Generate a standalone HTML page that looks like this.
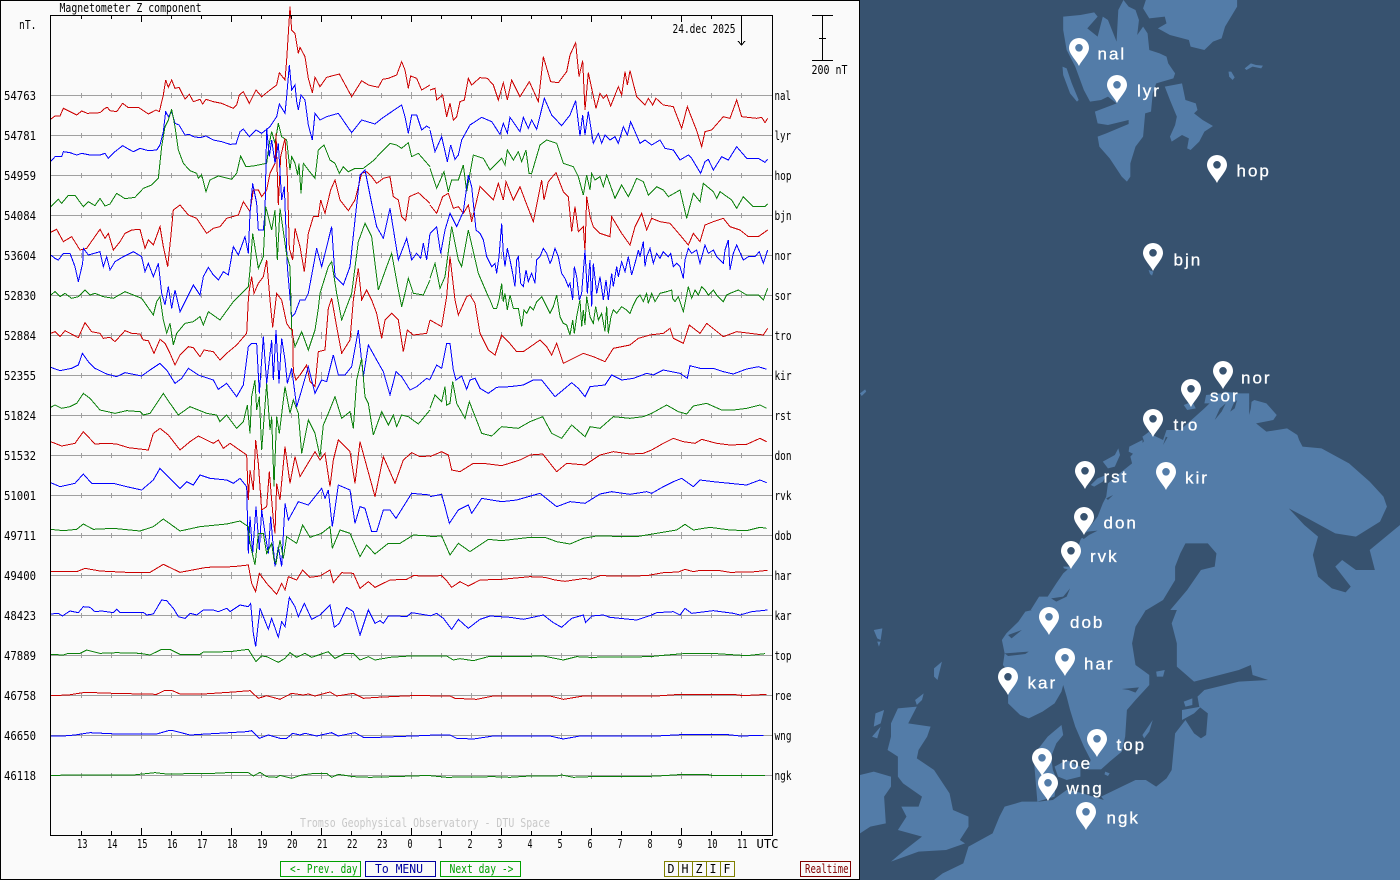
<!DOCTYPE html>
<html><head><meta charset="utf-8"><title>Magnetometer Z component</title>
<style>
html,body{margin:0;padding:0;background:#fafafa;width:1400px;height:880px;overflow:hidden}
svg{display:block}
.t text{font-family:"DejaVu Sans Mono","Liberation Mono",monospace;font-size:12px;fill:#000}
.tr polyline{fill:none;stroke-width:3;stroke-linejoin:miter}
.r{stroke:#cc0000}.b{stroke:#0000ff}.g{stroke:#0a800a}
.lb text{font-family:"Liberation Sans",sans-serif;font-size:17px;letter-spacing:2px;fill:#fff;stroke:#fff;stroke-width:.3}
</style></head><body>
<svg width="1400" height="880" viewBox="0 0 1400 880" xmlns="http://www.w3.org/2000/svg">
<defs>
<path id="tk" fill="none" stroke="#a0a0a0" d="M81.5 93v5M111.5 93v5M141.5 92v7M171.5 93v5M201.5 93v5M231.5 92v7M261.5 93v5M291.5 93v5M321.5 92v7M351.5 93v5M381.5 93v5M411.5 92v7M441.5 93v5M471.5 93v5M501.5 92v7M531.5 93v5M561.5 93v5M591.5 92v7M621.5 93v5M651.5 93v5M681.5 92v7M711.5 93v5M741.5 93v5"/>
<path id="pin" fill="#fff" fill-rule="evenodd" d="M0 0C-2.5-5.5-10-12-10-18A10 10 0 1 1 10-18C10-12 2.5-5.5 0 0ZM0-22A3.8 3.8 0 1 0 0-14.4 3.8 3.8 0 1 0 0-22Z"/>
</defs>
<rect width="860" height="880" fill="#fafafa"/>
<!-- grid -->
<path fill="none" stroke="#a0a0a0" shape-rendering="crispEdges" d="M51 95.5H772M51 135.5H772M51 175.5H772M51 215.5H772M51 255.5H772M51 295.5H772M51 335.5H772M51 375.5H772M51 415.5H772M51 455.5H772M51 495.5H772M51 535.5H772M51 575.5H772M51 615.5H772M51 655.5H772M51 695.5H772M51 735.5H772M51 775.5H772"/>
<g shape-rendering="crispEdges">
<use href="#tk"/><use href="#tk" y="40"/><use href="#tk" y="80"/><use href="#tk" y="120"/><use href="#tk" y="160"/><use href="#tk" y="200"/><use href="#tk" y="240"/><use href="#tk" y="280"/><use href="#tk" y="320"/><use href="#tk" y="360"/><use href="#tk" y="400"/><use href="#tk" y="440"/><use href="#tk" y="480"/><use href="#tk" y="520"/><use href="#tk" y="560"/><use href="#tk" y="600"/><use href="#tk" y="640"/><use href="#tk" y="680"/>
</g>
<!-- traces -->
<g class="tr" shape-rendering="crispEdges">
<g transform="scale(.33333)">
<polyline class="r" points="152,358 165,348 180,348 190,325 210,335 230,345 245,333 262,340 300,338 315,325 322,322 330,332 350,335 368,310 385,323 415,322 445,342 468,330 478,335 490,285 497,240 505,262 515,240 525,265 537,262 555,297 568,283 580,305 600,298 608,312 618,298 640,305 665,310 700,325 710,315 718,285 730,275 748,310 768,270 785,290 810,270 830,255 838,218 855,240 860,180 870,20 875,90 885,100 895,160 900,142 915,170 925,235 937,278 945,232 960,260 980,232 1018,222 1055,290 1085,242 1105,255 1135,262 1148,238 1165,235 1190,225 1205,185 1215,210 1225,265 1232,228 1250,235 1265,270 1290,255"/>
<polyline class="b" points="152,485 165,470 185,470 190,455 210,458 230,465 245,460 270,465 300,465 315,460 325,475 345,455 368,437 385,447 400,455 420,445 445,452 470,450 480,435 490,395 497,335 505,350 515,335 525,370 537,375 555,405 568,403 580,410 600,413 618,408 640,420 665,425 690,433 708,432 720,395 730,387 748,410 768,390 785,400 810,380 830,350 838,312 855,340 860,290 868,195 875,270 885,255 890,305 895,330 903,285 915,300 925,375 937,420 945,340 960,360 980,350 1015,340 1055,398 1085,360 1125,372 1150,352 1205,315 1215,350 1225,400 1235,345 1250,345 1265,390 1280,378 1290,385"/>
<polyline class="g" points="152,620 165,608 175,598 185,610 205,586 225,586 250,620 265,605 285,617 300,595 315,618 330,612 350,580 375,596 405,592 430,565 455,555 475,535 485,440 495,380 505,360 515,328 525,380 535,450 550,490 570,512 590,520 595,535 605,525 618,575 630,540 655,528 695,538 710,520 722,468 738,500 760,498 800,490 808,430 815,395 825,430 835,370 845,410 860,420 870,510 875,470 885,490 893,525 897,490 903,580 910,490 925,510 945,535 955,450 972,435 990,480 1005,490 1018,520 1030,500 1045,515 1065,505 1090,505 1120,482 1150,450 1170,430 1190,435 1205,445 1225,428 1235,470 1255,460 1290,500"/>
<polyline class="r" points="152,697 170,688 190,725 215,710 240,750 260,745 300,688 315,715 325,700 340,750 360,725 375,700 395,690 420,688 435,745 445,720 460,735 480,680 490,740 503,800 512,715 520,630 540,615 565,645 590,655 620,700 640,685 660,680 680,655 715,645 730,605 750,635 760,570 775,570 785,590 800,570 810,520 825,490 828,400 835,615 842,470 855,415 862,530 868,745 878,780 885,685 900,740 913,815 925,700 940,650 955,650 962,600 975,640 992,570 1005,540 1020,600 1045,632 1065,600 1085,520 1100,515 1115,530 1130,550 1150,535 1170,530 1180,590 1195,600 1205,650 1217,662 1228,590 1255,578 1290,610"/>
<polyline class="b" points="152,765 165,775 175,780 190,760 210,760 225,800 235,845 248,790 250,745 265,765 300,755 310,800 320,770 330,810 345,785 370,770 400,755 425,770 435,815 445,790 460,830 475,790 485,880 495,915 505,860 515,925 525,870 540,935 555,905 580,855 600,885 610,830 625,802 640,825 655,840 670,815 685,825 700,740 715,765 735,710 745,760 750,640 758,550 770,610 775,690 790,690 795,640 800,385 808,470 815,420 825,490 835,430 845,600 853,560 862,800 875,950 885,940 900,900 915,900 925,880 950,745 965,800 985,720 995,680 1005,830 1030,855 1050,800 1065,660 1080,525 1095,510 1115,610 1130,680 1150,715 1170,625 1195,780 1220,715 1235,780 1250,760 1262,775 1270,730 1280,780 1290,700"/>
<polyline class="g" points="152,885 165,875 180,890 195,880 215,895 235,890 255,870 270,885 285,880 310,890 340,895 375,875 400,885 425,895 460,945 470,905 480,890 490,960 500,1000 510,970 520,1035 530,1000 555,970 580,965 600,950 610,975 625,935 660,960 700,905 720,885 745,860 750,810 758,700 775,805 790,770 797,620 805,650 815,690 825,630 832,780 840,625 860,765 870,800 875,990 885,1040 905,995 925,1050 945,990 955,925 960,880 985,800 995,785 1010,880 1025,960 1055,880 1075,725 1095,670 1115,710 1135,870 1160,800 1175,760 1195,870 1205,920 1215,880 1225,835 1240,880 1270,885 1290,840"/>
</g>
<g transform="translate(430,0) scale(.33333)">
<polyline class="r" points="0,270 15,265 20,300 38,285 50,350 60,310 70,360 80,350 90,305 103,300 115,235 125,255 150,233 172,235 190,255 205,300 220,248 232,300 245,240 270,290 298,245 325,305 340,170 362,245 385,248 410,215 420,165 437,128 447,230 458,182 465,330 475,218 485,265 498,325 510,280 520,295 530,285 542,318 565,260 575,285 585,215 592,255 600,212 620,290 645,315 655,295 668,315 678,295 700,315 730,320 755,385 772,320 800,392 815,440 825,395 845,390 880,350 900,355 920,300 935,350 980,355 995,352 1005,368 1013,355"/>
<polyline class="b" points="0,390 15,455 35,410 52,485 62,435 75,478 85,465 95,420 120,375 155,352 185,365 210,403 220,370 232,400 240,352 270,395 280,352 295,385 305,360 320,388 343,295 365,345 395,377 420,345 437,302 450,408 458,345 465,405 475,335 490,430 505,400 515,430 525,405 540,420 555,410 565,430 580,380 592,405 602,365 615,395 630,430 645,420 665,435 690,420 705,445 730,450 750,480 775,465 785,475 812,520 825,485 835,478 850,510 875,470 895,480 920,440 950,475 985,475 1005,487 1013,478"/>
<polyline class="g" points="0,505 20,565 42,515 55,575 65,540 85,540 100,495 110,575 130,465 160,475 180,510 215,475 225,495 232,450 250,480 265,455 275,485 288,450 297,520 305,520 330,435 350,420 380,430 400,490 430,500 445,530 460,585 470,525 480,570 485,520 495,540 510,530 520,560 530,525 555,595 575,555 595,590 605,570 620,535 640,545 655,585 680,560 700,570 715,590 750,570 770,655 790,580 810,605 820,550 850,575 860,595 870,575 905,600 920,625 940,590 970,620 1005,620 1013,612"/>
<polyline class="r" points="0,615 20,640 38,590 55,580 70,625 85,620 100,640 115,615 125,665 150,560 190,600 205,550 220,600 228,545 250,600 270,560 285,600 310,665 335,540 342,600 355,545 378,518 400,575 415,590 425,695 435,620 445,695 460,680 465,755 470,590 480,650 490,680 510,700 540,710 545,650 575,700 600,735 615,680 635,640 650,690 665,655 690,665 720,670 750,705 775,735 790,700 810,725 825,675 850,665 880,655 900,680 930,690 955,710 985,710 1013,690"/>
<polyline class="b" points="0,700 20,680 32,760 45,690 60,640 80,680 100,635 115,525 125,560 138,690 150,700 160,720 170,770 175,780 185,800 195,790 200,820 207,770 215,670 220,760 225,800 232,745 240,780 248,820 255,860 260,780 265,770 272,850 280,860 288,810 295,845 305,820 315,850 320,780 330,770 340,745 350,760 360,790 365,780 375,745 385,770 395,820 405,835 415,860 420,850 428,900 433,800 440,830 448,900 455,880 465,750 472,880 480,780 485,920 490,790 500,880 510,830 520,900 528,840 535,900 545,820 550,860 560,800 565,830 575,785 585,815 595,770 605,825 615,790 625,750 630,770 640,725 645,800 650,770 660,745 670,790 680,760 690,775 700,755 715,770 722,760 730,800 740,790 750,800 760,835 765,780 775,745 785,760 800,750 810,790 825,735 835,760 850,750 860,770 880,790 885,750 895,720 900,810 910,760 920,735 940,780 955,770 975,770 988,755 1000,790 1013,750"/>
<polyline class="g" points="0,835 15,790 30,865 45,830 65,680 85,780 95,800 115,690 145,820 175,890 180,900 190,925 200,925 208,895 215,850 220,905 225,880 232,930 240,885 250,925 265,925 275,980 282,930 290,940 300,920 310,930 320,905 335,890 345,910 360,940 370,920 380,885 390,950 400,970 410,975 420,1005 428,960 433,1000 440,950 450,900 455,980 460,930 465,975 470,890 480,950 490,970 497,920 505,960 515,940 525,995 530,920 535,1000 543,950 550,930 560,940 575,920 590,930 600,940 610,915 620,895 630,885 640,905 650,880 655,910 665,880 675,905 690,880 710,875 725,870 728,895 735,905 745,890 760,935 768,895 775,860 785,895 795,870 805,885 815,860 825,870 835,885 850,870 860,885 880,905 890,885 900,880 925,870 950,885 985,885 1000,900 1013,865"/>
</g>
<g transform="translate(0,300) scale(.33333)">
<polyline class="r" points="152,100 165,95 180,110 195,92 235,113 255,68 275,95 300,100 310,115 330,112 345,125 375,92 395,100 420,102 430,120 445,122 462,160 480,118 495,130 510,160 525,195 540,165 565,140 580,143 600,170 612,150 640,155 660,180 680,160 710,135 740,100 745,0 748,-30 755,-70 762,-20 775,-50 790,-70 800,-120 810,0 818,82 830,-20 845,0 860,70 870,85 878,90 880,215 888,240 900,225 920,195 930,245 945,260 955,155 975,150 985,25 995,-5 1010,80 1025,160 1050,120 1060,0 1075,-95 1085,0 1100,-30 1115,0 1130,40 1145,115 1155,60 1175,40 1195,60 1210,155 1222,90 1240,105 1280,100 1290,60"/>
<polyline class="b" points="152,202 180,212 215,205 235,195 247,160 265,185 285,205 320,222 350,230 375,218 425,228 450,210 480,190 500,210 525,250 545,235 565,205 595,225 640,240 655,268 680,250 710,290 730,255 745,140 755,130 770,130 778,280 790,110 800,250 815,120 820,240 828,90 837,250 845,115 855,180 862,250 875,205 890,320 905,270 925,200 945,280 965,240 980,245 1000,165 1015,225 1035,225 1055,200 1075,90 1090,230 1105,135 1130,180 1150,215 1170,285 1188,215 1205,230 1230,270 1250,260 1280,235 1290,240"/>
<polyline class="g" points="152,322 165,315 185,325 210,320 230,310 250,280 270,295 300,330 345,340 380,332 420,335 430,345 450,340 490,280 510,310 535,345 570,320 620,340 650,345 660,365 680,345 710,385 730,365 742,315 750,400 755,290 765,240 770,330 778,290 785,450 800,250 810,390 815,350 822,560 830,350 838,400 855,260 870,340 880,300 895,340 905,460 925,360 945,400 960,470 970,375 985,340 1005,290 1025,355 1050,335 1060,385 1070,240 1085,175 1095,290 1105,310 1120,405 1145,335 1165,375 1180,345 1190,380 1205,345 1225,350 1255,372 1290,330"/>
<polyline class="r" points="152,425 185,438 225,430 250,395 285,432 320,430 350,432 385,443 445,450 460,400 480,385 505,405 540,450 570,425 595,408 640,430 655,420 670,445 690,430 740,465 745,600 750,510 760,570 767,420 775,490 785,630 800,620 808,515 820,660 825,700 830,550 840,600 855,440 870,550 885,470 900,530 930,480 945,455 960,480 975,460 990,560 1000,480 1015,420 1050,455 1065,550 1080,425 1095,480 1125,590 1150,470 1185,550 1210,480 1235,458 1260,470 1290,468"/>
<polyline class="b" points="152,548 180,560 225,550 250,522 275,550 340,550 380,560 425,570 460,540 480,505 510,535 540,565 560,545 580,555 600,525 630,535 680,540 700,550 720,535 740,560 745,760 750,650 758,760 768,620 778,750 785,630 795,700 805,760 812,650 825,800 835,740 845,800 855,610 865,660 895,605 925,615 945,590 965,565 975,595 985,570 997,680 1015,555 1050,570 1065,670 1080,620 1095,625 1115,695 1130,695 1150,630 1170,630 1188,655 1235,580 1290,585"/>
<polyline class="g" points="152,688 190,692 230,688 250,672 280,688 340,685 420,693 460,680 490,657 540,693 600,680 680,672 720,663 745,680 750,730 765,795 775,700 790,700 800,760 815,730 822,780 828,790 840,720 850,775 860,710 890,730 908,675 930,712 965,700 990,680 997,745 1020,690 1050,700 1080,770 1100,735 1125,762 1165,730 1200,730 1240,705 1290,708"/>
</g>
<g transform="translate(430,300) scale(.33333)">
<polyline class="r" points="0,60 35,80 50,-10 60,-130 75,0 85,45 110,-10 120,-15 135,10 150,100 175,150 195,165 215,105 235,125 260,155 280,155 330,120 350,140 365,165 380,130 400,190 420,180 460,160 490,170 525,185 550,145 600,135 625,115 660,105 700,100 720,85 730,115 760,130 778,75 810,100 830,70 880,110 920,95 1000,105 1013,85"/>
<polyline class="b" points="0,238 20,195 35,205 50,130 60,130 70,210 78,240 95,228 110,268 120,240 135,235 150,265 175,280 200,262 240,260 280,255 310,240 335,240 375,290 405,265 425,248 445,265 465,290 480,260 525,255 545,225 575,240 610,235 650,220 670,225 700,210 750,220 772,235 780,197 810,205 850,205 880,215 910,222 950,207 985,200 1010,208"/>
<polyline class="g" points="0,325 15,285 35,305 45,260 50,315 60,310 68,245 80,310 105,355 118,305 155,400 185,408 215,380 265,385 300,365 338,350 365,400 395,415 425,375 465,410 480,380 510,385 550,350 600,355 640,350 665,340 710,315 745,335 770,342 790,318 830,310 875,330 910,330 950,325 990,315 1010,325"/>
<polyline class="r" points="0,470 35,455 55,465 65,510 90,515 130,490 160,490 215,497 270,480 300,465 338,462 380,515 410,490 465,495 510,465 550,455 600,462 640,460 665,450 700,430 730,415 760,425 795,430 815,418 860,430 900,435 950,433 990,415 1010,425"/>
<polyline class="b" points="0,590 35,583 45,620 58,670 85,630 115,615 125,640 155,595 215,605 260,600 330,580 380,620 420,605 465,610 510,582 545,575 600,583 650,575 665,580 700,560 730,545 755,535 790,560 810,540 850,545 900,550 950,555 990,540 1010,548"/>
<polyline class="g" points="0,710 35,708 60,765 85,730 120,755 175,718 215,722 300,712 345,712 380,725 420,732 460,715 500,708 620,710 680,700 740,690 765,673 790,690 840,682 900,690 950,692 990,682 1010,685"/>
</g>
<g transform="translate(0,560) scale(.33333)">
<polyline class="r" points="152,35 230,35 255,25 300,33 380,37 450,37 490,13 540,37 620,22 700,20 745,15 755,70 767,95 778,40 800,70 830,103 845,70 855,90 865,50 890,60 908,30 930,52 960,48 990,30 1000,68 1025,38 1060,40 1080,85 1105,65 1125,82 1170,60 1220,58 1240,47 1290,48"/>
<polyline class="b" points="152,162 175,160 187,168 210,153 235,158 250,140 270,142 285,155 305,153 340,158 350,148 360,158 430,157 440,165 460,162 485,120 500,122 520,145 535,170 555,175 570,160 590,165 610,150 640,150 655,155 680,145 690,155 720,135 745,140 752,130 760,220 767,260 780,145 805,208 815,175 835,232 845,185 855,200 868,112 885,140 895,170 913,130 935,178 960,165 990,135 1003,202 1018,190 1040,142 1060,155 1080,225 1105,150 1125,190 1140,182 1150,190 1165,168 1190,168 1220,170 1235,158 1260,162 1290,167"/>
<polyline class="g" points="152,283 190,285 205,280 240,280 260,270 300,280 350,278 420,280 450,285 485,268 510,268 540,283 600,283 610,276 690,275 745,268 768,305 785,288 800,290 835,307 855,295 870,278 890,292 915,280 935,292 985,275 1005,295 1035,280 1060,280 1080,300 1105,290 1125,300 1170,292 1230,288 1290,288"/>
<polyline class="r" points="152,407 205,405 255,397 340,400 470,403 495,391 515,391 540,402 610,402 700,396 750,392 775,415 800,407 840,418 875,400 910,405 925,402 945,408 990,396 1010,408 1060,400 1090,415 1130,412 1235,407 1290,407"/>
<polyline class="b" points="152,528 190,528 225,525 270,518 350,522 470,522 505,512 520,512 570,525 620,522 740,515 755,512 778,535 805,525 840,535 860,535 878,520 900,525 915,520 950,528 995,518 1015,528 1065,518 1090,532 1135,532 1290,526"/>
<polyline class="g" points="152,647 200,645 400,645 465,638 500,642 640,640 700,637 745,638 760,648 780,637 800,650 830,652 840,646 875,655 905,645 945,640 980,640 995,652 1015,643 1060,650 1110,652 1240,648 1290,646"/>
</g>
<g transform="translate(430,560) scale(.33333)">
<polyline class="r" points="0,48 35,47 50,62 65,82 90,65 115,78 150,60 215,58 300,50 345,52 375,60 405,64 465,55 480,58 510,47 580,48 650,47 700,38 745,36 765,28 790,35 810,31 870,32 900,37 965,36 1013,31"/>
<polyline class="b" points="0,168 20,160 40,175 65,208 85,178 115,205 150,178 180,168 240,172 280,178 340,165 370,188 395,202 425,175 460,165 467,188 485,168 520,165 540,172 620,180 665,165 680,158 730,155 750,165 765,145 785,160 850,152 910,160 930,165 965,155 1013,150"/>
<polyline class="g" points="0,288 50,288 70,300 90,296 130,302 175,290 250,290 340,288 400,300 440,290 480,292 660,290 700,286 760,281 860,281 950,287 1005,281"/>
<polyline class="r" points="0,408 60,408 75,415 140,418 190,408 360,408 400,418 460,408 680,408 750,403 910,403 940,407 1010,403"/>
<polyline class="b" points="0,525 60,525 80,535 130,537 190,528 360,528 400,537 450,528 680,528 770,523 885,523 930,528 1000,526"/>
<polyline class="g" points="0,647 50,652 190,650 240,652 300,648 380,648 395,645 430,652 480,650 640,650 700,647 760,643 830,643 850,647 1005,647"/>
</g>
</g>
<!-- axes -->
<g fill="none" stroke="#000" shape-rendering="crispEdges">
<rect x="50.5" y="15.5" width="722" height="820"/>
<path d="M81.5 15v4M111.5 15v4M141.5 15v7M171.5 15v4M201.5 15v4M231.5 15v7M261.5 15v4M291.5 15v4M321.5 15v7M351.5 15v4M381.5 15v4M411.5 15v7M441.5 15v4M471.5 15v4M501.5 15v7M531.5 15v4M561.5 15v4M591.5 15v7M621.5 15v4M651.5 15v4M681.5 15v7M711.5 15v4"/>
<path d="M81.5 835v-4M111.5 835v-4M141.5 835v-7M171.5 835v-4M201.5 835v-4M231.5 835v-7M261.5 835v-4M291.5 835v-4M321.5 835v-7M351.5 835v-4M381.5 835v-4M411.5 835v-7M441.5 835v-4M471.5 835v-4M501.5 835v-7M531.5 835v-4M561.5 835v-4M591.5 835v-7M621.5 835v-4M651.5 835v-4M681.5 835v-7M711.5 835v-4M741.5 835v-4"/>
<path d="M741.5 15v30M738 41l3.5 4 3.5-4"/>
<path d="M822.5 15v45M812 15.5h21M812 60.5h21M819 38.5h7"/>
<rect x=".5" y=".5" width="859" height="879"/>
</g>
<!-- text -->
<g class="t">
<text x="59.5" y="12" textLength="142" lengthAdjust="spacingAndGlyphs">Magnetometer Z component</text>
<text x="19" y="29" textLength="17.5" lengthAdjust="spacingAndGlyphs">nT.</text>
<text x="672.5" y="33" textLength="63" lengthAdjust="spacingAndGlyphs">24.dec 2025</text>
<text x="811.5" y="74" textLength="36" lengthAdjust="spacingAndGlyphs">200 nT</text>
<g>
<text x="4" y="100" textLength="32" lengthAdjust="spacingAndGlyphs">54763</text>
<text x="4" y="140" textLength="32" lengthAdjust="spacingAndGlyphs">54781</text>
<text x="4" y="180" textLength="32" lengthAdjust="spacingAndGlyphs">54959</text>
<text x="4" y="220" textLength="32" lengthAdjust="spacingAndGlyphs">54084</text>
<text x="4" y="260" textLength="32" lengthAdjust="spacingAndGlyphs">53604</text>
<text x="4" y="300" textLength="32" lengthAdjust="spacingAndGlyphs">52830</text>
<text x="4" y="340" textLength="32" lengthAdjust="spacingAndGlyphs">52884</text>
<text x="4" y="380" textLength="32" lengthAdjust="spacingAndGlyphs">52355</text>
<text x="4" y="420" textLength="32" lengthAdjust="spacingAndGlyphs">51824</text>
<text x="4" y="460" textLength="32" lengthAdjust="spacingAndGlyphs">51532</text>
<text x="4" y="500" textLength="32" lengthAdjust="spacingAndGlyphs">51001</text>
<text x="4" y="540" textLength="32" lengthAdjust="spacingAndGlyphs">49711</text>
<text x="4" y="580" textLength="32" lengthAdjust="spacingAndGlyphs">49400</text>
<text x="4" y="620" textLength="32" lengthAdjust="spacingAndGlyphs">48423</text>
<text x="4" y="660" textLength="32" lengthAdjust="spacingAndGlyphs">47889</text>
<text x="4" y="700" textLength="32" lengthAdjust="spacingAndGlyphs">46758</text>
<text x="4" y="740" textLength="32" lengthAdjust="spacingAndGlyphs">46650</text>
<text x="4" y="780" textLength="32" lengthAdjust="spacingAndGlyphs">46118</text>
</g>
<g>
<text x="774.5" y="100" textLength="16.5" lengthAdjust="spacingAndGlyphs">nal</text>
<text x="774.5" y="140" textLength="16.5" lengthAdjust="spacingAndGlyphs">lyr</text>
<text x="774.5" y="180" textLength="17" lengthAdjust="spacingAndGlyphs">hop</text>
<text x="774.5" y="220" textLength="17" lengthAdjust="spacingAndGlyphs">bjn</text>
<text x="774.5" y="260" textLength="17" lengthAdjust="spacingAndGlyphs">nor</text>
<text x="774.5" y="300" textLength="17" lengthAdjust="spacingAndGlyphs">sor</text>
<text x="774.5" y="340" textLength="17" lengthAdjust="spacingAndGlyphs">tro</text>
<text x="774.5" y="380" textLength="17" lengthAdjust="spacingAndGlyphs">kir</text>
<text x="774.5" y="420" textLength="17" lengthAdjust="spacingAndGlyphs">rst</text>
<text x="774.5" y="460" textLength="17" lengthAdjust="spacingAndGlyphs">don</text>
<text x="774.5" y="500" textLength="17" lengthAdjust="spacingAndGlyphs">rvk</text>
<text x="774.5" y="540" textLength="17" lengthAdjust="spacingAndGlyphs">dob</text>
<text x="774.5" y="580" textLength="17" lengthAdjust="spacingAndGlyphs">har</text>
<text x="774.5" y="620" textLength="17" lengthAdjust="spacingAndGlyphs">kar</text>
<text x="774.5" y="660" textLength="17" lengthAdjust="spacingAndGlyphs">top</text>
<text x="774.5" y="700" textLength="17" lengthAdjust="spacingAndGlyphs">roe</text>
<text x="774.5" y="740" textLength="17" lengthAdjust="spacingAndGlyphs">wng</text>
<text x="774.5" y="780" textLength="17" lengthAdjust="spacingAndGlyphs">ngk</text>
</g>
<g>
<text x="77" y="848" textLength="10.5" lengthAdjust="spacingAndGlyphs">13</text>
<text x="107" y="848" textLength="10.5" lengthAdjust="spacingAndGlyphs">14</text>
<text x="137" y="848" textLength="10.5" lengthAdjust="spacingAndGlyphs">15</text>
<text x="167" y="848" textLength="10.5" lengthAdjust="spacingAndGlyphs">16</text>
<text x="197" y="848" textLength="10.5" lengthAdjust="spacingAndGlyphs">17</text>
<text x="227" y="848" textLength="10.5" lengthAdjust="spacingAndGlyphs">18</text>
<text x="257" y="848" textLength="10.5" lengthAdjust="spacingAndGlyphs">19</text>
<text x="287" y="848" textLength="10.5" lengthAdjust="spacingAndGlyphs">20</text>
<text x="317" y="848" textLength="10.5" lengthAdjust="spacingAndGlyphs">21</text>
<text x="347" y="848" textLength="10.5" lengthAdjust="spacingAndGlyphs">22</text>
<text x="377" y="848" textLength="10.5" lengthAdjust="spacingAndGlyphs">23</text>
<text x="407.5" y="848" textLength="5" lengthAdjust="spacingAndGlyphs">0</text>
<text x="437.5" y="848" textLength="5" lengthAdjust="spacingAndGlyphs">1</text>
<text x="467.5" y="848" textLength="5" lengthAdjust="spacingAndGlyphs">2</text>
<text x="497.5" y="848" textLength="5" lengthAdjust="spacingAndGlyphs">3</text>
<text x="527.5" y="848" textLength="5" lengthAdjust="spacingAndGlyphs">4</text>
<text x="557.5" y="848" textLength="5" lengthAdjust="spacingAndGlyphs">5</text>
<text x="587.5" y="848" textLength="5" lengthAdjust="spacingAndGlyphs">6</text>
<text x="617.5" y="848" textLength="5" lengthAdjust="spacingAndGlyphs">7</text>
<text x="647.5" y="848" textLength="5" lengthAdjust="spacingAndGlyphs">8</text>
<text x="677.5" y="848" textLength="5" lengthAdjust="spacingAndGlyphs">9</text>
<text x="707" y="848" textLength="10.5" lengthAdjust="spacingAndGlyphs">10</text>
<text x="737" y="848" textLength="10.5" lengthAdjust="spacingAndGlyphs">11</text>
<text x="756.5" y="848" textLength="22" lengthAdjust="spacingAndGlyphs">UTC</text>
</g>
<text x="300" y="827" textLength="250" lengthAdjust="spacingAndGlyphs" style="fill:#c8c8c8">Tromso Geophysical Observatory - DTU Space</text>
<!-- buttons -->
<g fill="none" shape-rendering="crispEdges">
<rect x="280.5" y="861.5" width="80" height="15" stroke="#00a000"/>
<rect x="365.5" y="861.5" width="70" height="15" stroke="#0000a0"/>
<rect x="440.5" y="861.5" width="80" height="15" stroke="#00a000"/>
<rect x="664.5" y="861.5" width="70" height="15" stroke="#808000"/>
<path d="M678.5 861v16M692.5 861v16M706.5 861v16M720.5 861v16" stroke="#808000"/>
<rect x="800.5" y="861.5" width="50" height="15" stroke="#800000"/>
</g>
<text x="290" y="873" textLength="67.5" lengthAdjust="spacingAndGlyphs" style="fill:#00a000">&lt;- Prev. day</text>
<text x="375" y="873" textLength="48" lengthAdjust="spacingAndGlyphs" style="fill:#0000a0">To MENU</text>
<text x="449.5" y="873" textLength="64" lengthAdjust="spacingAndGlyphs" style="fill:#00a000">Next day -&gt;</text>
<text x="667.5" y="873" textLength="7" lengthAdjust="spacingAndGlyphs">D</text>
<text x="681.5" y="873" textLength="7" lengthAdjust="spacingAndGlyphs">H</text>
<text x="695.5" y="873" textLength="7" lengthAdjust="spacingAndGlyphs">Z</text>
<text x="709.5" y="873" textLength="7" lengthAdjust="spacingAndGlyphs">I</text>
<text x="723.5" y="873" textLength="7" lengthAdjust="spacingAndGlyphs">F</text>
<text x="805" y="873" textLength="43.5" lengthAdjust="spacingAndGlyphs" style="fill:#800000">Realtime</text>
</g>
<!-- map -->
<rect x="860" y="0" width="540" height="880" fill="#37526f"/>
<g fill="#537ca8">
<g transform="translate(860,0) scale(.34439,.33333)">
<polygon points="590,50 640,45 680,37 690,50 660,85 690,110 705,50 720,60 745,125 750,30 765,0 780,20 800,30 810,60 805,105 822,80 835,100 840,150 870,160 890,170 895,190 915,220 910,235 860,250 850,280 845,335 828,340 822,410 800,440 785,490 785,530 775,545 760,530 725,475 695,440 690,410 715,400 780,372 780,360 720,375 690,370 682,335 745,310 720,290 700,300 668,305 650,270 625,200 600,150 590,90"/>
<polygon points="588,200 600,205 615,250 635,300 630,305 610,280 590,225"/>
<polygon points="830,0 1095,0 1095,20 1060,80 1050,115 1025,125 1000,150 960,140 955,120 900,105 865,85 890,70 885,50 840,55 822,25"/>
<polygon points="885,260 935,250 945,300 975,310 980,330 970,340 995,360 1025,378 1000,395 985,425 960,450 950,445 955,415 935,405 905,425 900,410 915,375 920,350 900,300"/>
<polygon points="1070,215 1078,215 1088,232 1082,240 1072,230"/>
<polygon points="1117,205 1135,190 1150,195 1170,197 1165,205 1140,200 1122,210"/>
<polygon points="838,810 852,815 848,827 842,822"/>
</g>
<g transform="translate(860,340) scale(.34439,.33333)">
<polygon points="495,811 520,770 545,770 570,730 590,700 612,680 640,600 660,570 690,530 705,490 715,470 720,430 760,395 790,370 785,350 820,310 840,280 880,300 890,270 930,270 1000,205 1030,175 1060,155 1100,160 1130,160 1130,190 1145,180 1180,190 1210,225 1200,240 1150,250 1180,275 1240,265 1270,285 1275,300 1285,320 1340,325 1420,370 1480,425 1520,470 1530,500 1510,545 1440,590 1380,580 1300,535 1245,505 1290,555 1330,590 1315,645 1330,710 1370,745 1410,757 1425,740 1380,680 1400,660 1440,690 1495,690 1480,630 1568,555 1568,811"/>
<polygon points="705,365 740,345 750,325 755,345 740,380 720,385"/>
<polygon points="670,435 690,415 715,405 705,425 680,440"/>
<polygon points="782,320 820,300 822,320 800,345 780,335"/>
<polygon points="820,290 840,275 850,300 825,305"/>
<polygon points="940,195 965,185 975,205 950,210"/>
<polygon points="1005,165 1050,160 1030,190 1000,190"/>
<polygon points="0,160 15,148 18,155 5,168"/>
<polygon points="590,680 615,680 610,690 592,685"/>
</g>
<rect x="860" y="610" width="540" height="270"/>
</g>
<g fill="#37526f">
<g transform="translate(860,340) scale(.34439,.33333)">
<polygon points="945,610 1010,610 1035,640 1030,680 990,690 950,750 900,811 830,811 880,780 915,720 915,680 930,640"/>
<polygon points="1030,240 1045,205 1062,190 1050,215"/>
<polygon points="1075,215 1085,190 1095,180 1088,205"/>
<polygon points="1130,225 1130,190 1137,185 1135,205"/>
<polygon points="880,315 888,290 893,292"/>
<polygon points="640,590 660,575 690,572 665,585 650,597"/>
<polygon points="715,475 735,465 720,480"/>
<polygon points="555,775 590,770 610,745 600,770 570,785"/>
</g>
<g transform="translate(860,610) scale(.34439,.33333)">
<polygon points="0,0 500,0 480,5 460,35 425,70 412,90 420,130 415,165 440,195 430,230 430,280 465,315 490,325 530,305 565,280 585,245 590,225 600,260 610,300 625,350 650,410 670,450 660,478 700,478 725,455 760,425 770,380 775,300 800,270 840,225 840,195 800,165 790,100 800,50 830,0 920,0 905,40 920,100 920,170 970,215 1100,180 1135,165 1140,195 1185,210 1100,215 1000,240 980,260 985,290 1010,310 1005,375 990,385 970,370 945,330 915,370 905,480 890,505 860,530 830,510 800,510 760,530 700,560 708,570 640,548 600,540 560,570 520,575 470,575 420,590 405,620 385,670 315,710 300,760 240,790 215,810 0,810"/>
<polygon points="420,130 490,125 480,132 430,138"/>
<polygon points="430,75 470,60 440,85"/>
<polygon points="760,237 810,232 800,248 780,240"/>
</g>
</g>
<g fill="#537ca8" transform="translate(860,610) scale(.34439,.33333)">
<polygon points="90,340 110,295 165,290 140,340 205,350 195,380 170,420 165,445 215,480 260,550 270,600 315,620 315,650 290,690 305,700 250,720 170,725 90,755 130,720 180,680 110,660 135,620 120,590 170,590 180,560 125,520 110,500 110,440 80,420 90,380"/>
<polygon points="0,495 40,485 90,500 90,530 70,560 75,640 30,650 0,670"/>
<polygon points="45,310 70,300 60,340 40,350"/>
<polygon points="35,380 60,350 50,385"/>
<polygon points="160,270 185,250 180,270 165,285"/>
<polygon points="215,175 238,155 225,210 215,200"/>
<polygon points="40,60 65,55 60,90 50,85"/>
<polygon points="50,95 60,95 55,110"/>
<polygon points="515,420 545,380 585,345 590,375 570,400 555,440 560,480 570,505 565,560 515,575 505,450"/>
<polygon points="565,470 600,450 640,470 640,500 600,510 575,500"/>
<polygon points="712,485 725,490 720,498 710,493"/>
<polygon points="820,375 850,330 840,365 825,385"/>
<polygon points="860,185 885,180 880,200 862,200"/>
<polygon points="940,275 965,265 965,285 945,290"/>
<polygon points="935,300 990,290 970,310 935,330"/>
</g>
<!-- pins -->
<use href="#pin" x="1079" y="66"/>
<use href="#pin" x="1117" y="103"/>
<use href="#pin" x="1217" y="183"/>
<use href="#pin" x="1153" y="271"/>
<use href="#pin" x="1223" y="389"/>
<use href="#pin" x="1191" y="407"/>
<use href="#pin" x="1153" y="437"/>
<use href="#pin" x="1085" y="489"/>
<use href="#pin" x="1166" y="490"/>
<use href="#pin" x="1084" y="535"/>
<use href="#pin" x="1071" y="569"/>
<use href="#pin" x="1049" y="635"/>
<use href="#pin" x="1065" y="676"/>
<use href="#pin" x="1008" y="695"/>
<use href="#pin" x="1097" y="757"/>
<use href="#pin" x="1042" y="776"/>
<use href="#pin" x="1048" y="801"/>
<use href="#pin" x="1086" y="830"/>
<g class="lb">
<text x="1097.5" y="59.5">nal</text>
<text x="1137" y="96.3">lyr</text>
<text x="1236.5" y="176.3">hop</text>
<text x="1173.5" y="265.3">bjn</text>
<text x="1241" y="383.3">nor</text>
<text x="1210" y="401.3">sor</text>
<text x="1173.5" y="430.3">tro</text>
<text x="1103.5" y="482.3">rst</text>
<text x="1185" y="483.3">kir</text>
<text x="1103.5" y="528.3">don</text>
<text x="1090" y="562">rvk</text>
<text x="1070" y="628">dob</text>
<text x="1084" y="669.3">har</text>
<text x="1027.5" y="688.3">kar</text>
<text x="1116.5" y="750.3">top</text>
<text x="1061.5" y="769">roe</text>
<text x="1066.5" y="794">wng</text>
<text x="1106.5" y="823.3">ngk</text>
</g>
</svg>
</body></html>
